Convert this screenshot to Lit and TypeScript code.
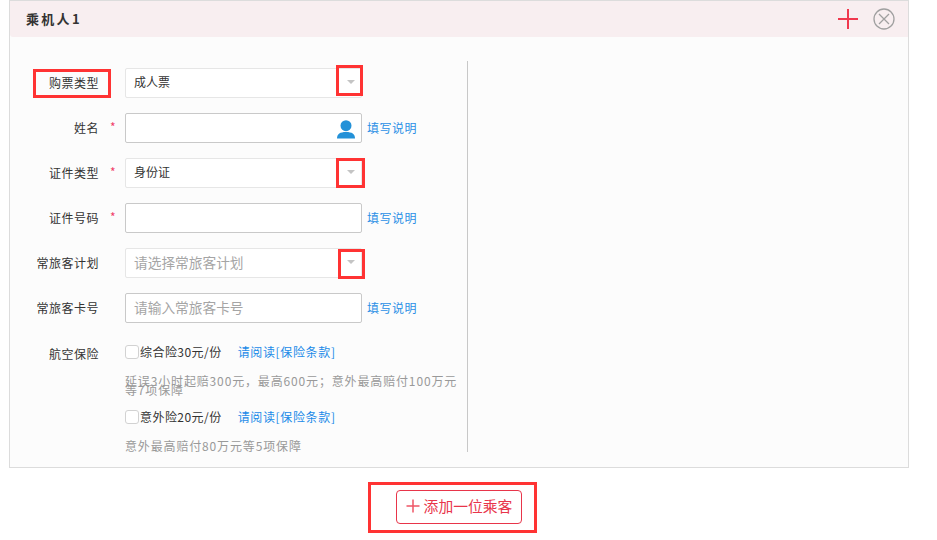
import { LitElement, html, css, svg } from "lit";
import { customElement } from "lit/decorators.js";

const chevron = html`<span class="caret"></span>`;

@customElement("app-root")
export class AppRoot extends LitElement {
  static styles = css`
    :host { display: block; position: relative; width: 937px; height: 540px; background: #fff; overflow: hidden;
      font-family: "Noto Sans CJK SC", "Liberation Sans", sans-serif; font-size: 12px; color: #333; }
    * { box-sizing: border-box; }
    .page { padding-left: 9px; width: 909px; }
    .card { border: 1px solid #dcdcdc; height: 468px; background: #fcfcfc; }
    .head { height: 36px; background: #f8eef0; display: flex; align-items: center; padding-left: 16px; padding-right: 13px; border-radius: 0 0 0 3px; }
    .title { font-size: 13px; font-weight: 700; letter-spacing: 2.3px; color: #333; flex: 1; line-height: 36px; padding-bottom: 2px; height: 36px; }
    .head svg { display: block; }
    .plus { margin-right: 15px; }
    .body { padding-top: 24px; }
    .form { width: 458px; height: 391px; border-right: 1px solid #c8c8c8; padding-top: 7px; }
    .row { display: flex; height: 30px; margin-bottom: 15px; align-items: center; }
    .label { width: 89px; text-align: right; letter-spacing: 0.5px; font-size: 12px; color: #333; flex: none; line-height: 16px; }
    .star { width: 26px; flex: none; color: #f0406a; font-size: 12px; padding-left: 11px; line-height: 16px; margin-top: -2px; }
    .field { width: 237px; height: 30px; flex: none; background: #fff; border-radius: 2px; display: flex; align-items: center; padding: 0 0 3px 8px; font-size: 12px; color: #333; position: relative; }
    .select { border: 1px solid #e6e6e6; }
    .input { border: 1px solid #c9c9c9; }
    .ph { color: #a5a5a5; font-size: 13.7px; }
    .caret { position: absolute; right: 6px; top: 11px; border: 4px solid transparent; border-top: 4px solid #c4c4c4; border-bottom: 0; }
    .user { position: absolute; right: 5px; top: 6px; }
    .link { color: #2a8fe6; margin-left: 5px; font-size: 12px; letter-spacing: 0.5px; white-space: nowrap; line-height: 16px; }
    .ins { display: flex; padding-top: 5px; }
    .ins .label { line-height: 17px; margin-top: 2px; }
    .ins-col { margin-left: 26px; width: 336px; }
    .opt { display: flex; align-items: center; height: 17px; color: #333; letter-spacing: 0.45px; }
    .box { width: 14px; height: 14px; border: 1px solid #d2d2d2; border-radius: 3px; background: #fff; flex: none; margin-right: 1px; }
    .opt a { color: #1a8ae8; margin-left: 16px; letter-spacing: 0.65px; }
    .desc { color: #999; font-size: 12px; line-height: 9px; margin-top: 16px; width: 340px; letter-spacing: 0.85px; }
    .d1 { margin-bottom: 14px; }
    .footer { display: flex; justify-content: center; padding-left: 9px; width: 909px; margin-top: 22px; }
    .add { width: 126px; height: 34px; border: 1px solid #e8354a; border-radius: 4px; color: #e8354a; display: flex; align-items: center; justify-content: center; gap: 4px; font-size: 14.8px; background: #fff; padding: 0 0 3px 0; }
    .mark { position: absolute; border: 3px solid #f33; pointer-events: none; }
    .m1 { left: 33px; top: 69px; width: 78px; height: 29px; }
    .m2 { left: 336px; top: 65px; width: 27px; height: 31px; }
    .m3 { left: 336px; top: 158px; width: 29px; height: 30px; }
    .m4 { left: 338px; top: 249px; width: 27px; height: 30px; }
    .m5 { left: 368px; top: 482px; width: 169px; height: 51px; }
  `;

  private row(label: string, star: boolean, control: unknown, link = false) {
    return html`<div class="row">
      <div class="label">${label}</div>
      <div class="star">${star ? "*" : ""}</div>
      ${control}
      ${link ? html`<span class="link">填写说明</span>` : ""}
    </div>`;
  }

  render() {
    const user = html`<svg class="user" width="20" height="20" viewBox="0 0 20 20"><circle cx="10" cy="5.7" r="5.5" fill="#2391d8"/><path d="M1 18.5c0-4.5 3-6.5 9-6.5s9 2 9 6.5z" fill="#2391d8"/></svg>`;
    return html`
      <div class="page">
        <div class="card">
          <div class="head">
            <div class="title">乘机人1</div>
            <svg class="plus" width="20" height="20" viewBox="0 0 20 20">${svg`<path d="M10 0v20M0 10h20" stroke="#f0384e" stroke-width="2" fill="none"/>`}</svg>
            <svg width="22" height="22" viewBox="0 0 22 22"><circle cx="11" cy="11" r="10" fill="none" stroke="#a0a0a0" stroke-width="1.3"/><path d="M6 6l10 10M16 6L6 16" stroke="#a0a0a0" stroke-width="1.3"/></svg>
          </div>
          <div class="body">
            <div class="form">
              ${this.row("购票类型", false, html`<div class="field select">成人票${chevron}</div>`)}
              ${this.row("姓名", true, html`<div class="field input">${user}</div>`, true)}
              ${this.row("证件类型", true, html`<div class="field select">身份证${chevron}</div>`)}
              ${this.row("证件号码", true, html`<div class="field input"></div>`, true)}
              ${this.row("常旅客计划", false, html`<div class="field select"><span class="ph">请选择常旅客计划</span>${chevron}</div>`)}
              ${this.row("常旅客卡号", false, html`<div class="field input"><span class="ph">请输入常旅客卡号</span></div>`, true)}
              <div class="ins">
                <div class="label">航空保险</div>
                <div class="ins-col">
                  <div class="opt"><span class="box"></span>综合险30元/份<a>请阅读[保险条款]</a></div>
                  <div class="desc d1">延误3小时起赔300元，最高600元；意外最高赔付100万元等7项保障</div>
                  <div class="opt"><span class="box"></span>意外险20元/份<a>请阅读[保险条款]</a></div>
                  <div class="desc">意外最高赔付80万元等5项保障</div>
                </div>
              </div>
            </div>
          </div>
        </div>
      </div>
      <div class="footer">
        <div class="add"><svg width="14" height="14" viewBox="0 0 14 14"><path d="M7 0.5v13M0.5 7h13" stroke="#ee5566" stroke-width="1.5" fill="none"/></svg>添加一位乘客</div>
      </div>
      <div class="mark m1"></div>
      <div class="mark m2"></div>
      <div class="mark m3"></div>
      <div class="mark m4"></div>
      <div class="mark m5"></div>
    `;
  }
}
